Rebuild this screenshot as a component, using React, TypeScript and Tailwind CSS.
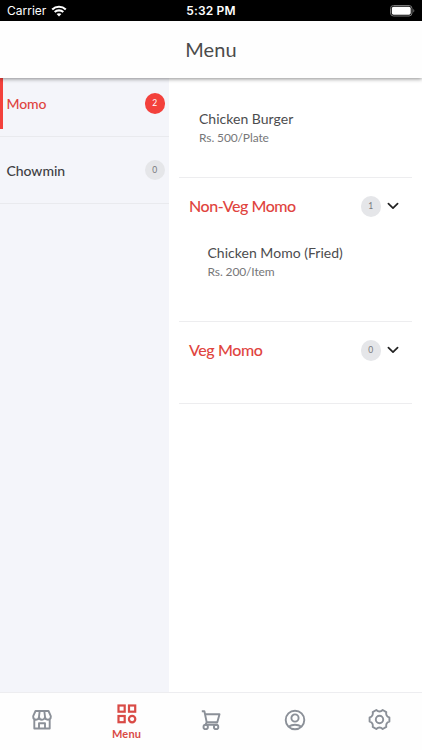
import React from 'react';
import clsx from 'clsx';

const categories = [
  { name: 'Momo', count: 2, active: true, spacing: 'tracking-[-0.1px]' },
  { name: 'Chowmin', count: 0, active: false, spacing: 'tracking-[-0.05px]' },
];

const StatusBar = () => (
  <div className="flex h-[21px] shrink-0 items-center bg-black px-[7px] font-['Inter',sans-serif] text-[12px] text-white">
    <div className="flex flex-1 items-center gap-[5px]">
      <span>Carrier</span>
      <svg width="16" height="12" viewBox="0 0 16 12" fill="none" stroke="white" strokeWidth="2.1">
        <path d="M1.2 4.4C5 .8 11 .8 14.8 4.4" />
        <path d="M3.7 7.1c2.4-2.3 6.2-2.3 8.6 0" />
        <path d="M5.6 9.1c1.3-1.2 3.5-1.2 4.8 0L8 11.6z" fill="white" stroke="none" />
      </svg>
    </div>
    <span className="font-semibold tracking-[0.15px]">5:32 PM</span>
    <div className="flex flex-1 justify-end">
      <svg width="25" height="12" viewBox="0 0 25 12">
        <rect x=".5" y=".5" width="21.5" height="10.5" rx="3" fill="none" stroke="#777" />
        <rect x="1.8" y="1.8" width="18.9" height="7.9" rx="1.7" fill="white" />
        <path d="M23.3 4v3.5c1.4-.5 1.4-3 0-3.5z" fill="#777" />
      </svg>
    </div>
  </div>
);

interface CountBadgeProps {
  count: number;
  active?: boolean;
}

const CountBadge = ({ count, active }: CountBadgeProps) => (
  <span
    className={clsx(
      'flex size-[20.5px] shrink-0 items-center justify-center rounded-full text-[8.5px]',
      active ? 'bg-[#f3413c] text-white' : 'bg-[#e5e6e9] text-[#77787c]'
    )}
  >
    {count}
  </span>
);

interface SectionHeaderProps {
  title: string;
  count: number;
  spacing: string;
}

const SectionHeader = ({ title, count, spacing }: SectionHeaderProps) => (
  <div className="flex h-[57px] items-center pr-[13px] pl-[10px]">
    <h2 className={clsx('flex-1 pb-[2px] text-[16px] font-medium text-[#df4440]', spacing)}>{title}</h2>
    <CountBadge count={count} />
    <svg className="mb-px ml-[6px]" width="12" height="8" viewBox="0 0 12 8" fill="none" stroke="#222" strokeWidth="1.7">
      <path d="M1.4 1.7 6 6.2l4.6-4.5" strokeLinecap="round" strokeLinejoin="round" />
    </svg>
  </div>
);

interface MenuItemProps {
  name: string;
  price: string;
}

const MenuItem = ({ name, price }: MenuItemProps) => (
  <div>
    <div className="text-[14px] leading-[20px] tracking-[0.02px] text-[#4c4c4e]">{name}</div>
    <div className="text-[12px] leading-[18px] tracking-[-0.12px] text-[#777779]">{price}</div>
  </div>
);

const StoreIcon = () => (
  <svg width="22" height="22" viewBox="0 0 22 22" fill="none" stroke="currentColor" strokeWidth="1.9" strokeLinejoin="round">
    <path d="M4.5 2h13l2.3 5.2v.6a2.9 2.9 0 0 1-5.8 0 3 3 0 0 1-6 0 2.9 2.9 0 0 1-5.8 0v-.6zM8 7.5 8.7 2M14 7.5 13.3 2M3.3 10.5v9h15.4v-9" />
    <path d="M8 19.5v-5.3h6v5.3" />
  </svg>
);

const GridIcon = () => (
  <svg width="20" height="20" viewBox="0 0 20 20" fill="none" stroke="currentColor" strokeWidth="2.2">
    <rect x="1.5" y="1.5" width="6.2" height="6.2" />
    <rect x="12" y="1.5" width="6.2" height="6.2" />
    <rect x="1.5" y="12" width="6.2" height="6.2" />
    <circle cx="15.1" cy="15.1" r="3.2" />
  </svg>
);

const CartIcon = () => (
  <svg width="20" height="21" viewBox="0 0 20 21" fill="none" stroke="currentColor" strokeWidth="1.9" strokeLinejoin="round">
    <path d="M.8 1.3h2.6l2.4 11.4M4.3 4.3h14.2l-2.2 7.9H5.7l-1.3 2.6h12.4" />
    <circle cx="4.7" cy="16.9" r="2.2" />
    <circle cx="15.1" cy="16.9" r="2.2" />
  </svg>
);

const ProfileIcon = () => (
  <svg width="22" height="22" viewBox="0 0 22 22" fill="none" stroke="currentColor" strokeWidth="1.9">
    <circle cx="11" cy="11" r="9.3" />
    <circle cx="11" cy="9" r="3.6" />
    <path d="M5 17.6c3-2.4 9-2.4 12 0" />
  </svg>
);

const GearIcon = () => (
  <svg width="23" height="23" viewBox="-11.5 -11.5 23 23" fill="none" stroke="currentColor" strokeWidth="1.9" strokeLinejoin="round">
    <path d="M9.9-2.1V2.1Q7.9 2.3 7.1 4.1T6.8 7.4L3.2 9.5Q1.7 8 0 8T-3.2 9.5L-6.8 7.4Q-6.3 5.9-7.1 4.1T-9.9 2.1V-2.1Q-7.9-2.3-7.1-4.1T-6.8-7.4L-3.2-9.5Q-1.7-8 0-8T3.2-9.5L6.8-7.4Q6.3-5.9 7.1-4.1T9.9-2.1Z" />
    <circle r="3.7" />
  </svg>
);

const App = () => {
  return (
    <div className="flex h-[750px] w-full flex-col overflow-hidden bg-white font-['Lato',sans-serif]">
      <StatusBar />
      <header className="relative flex h-[57px] shrink-0 items-center justify-center bg-[#fefefe] shadow-[0_1px_4px_rgba(0,0,0,0.45)]">
        <h1 className="-mt-[2px] text-[20px] tracking-[0.15px] text-[#4b4b4b]">Menu</h1>
      </header>

      <main className="flex flex-1">
        {/* Categories */}
        <aside className="w-[169px] bg-[#f4f5fa]">
          {categories.map((category, index) => (
            <div
              key={category.name}
              className={clsx('flex flex-col border-b border-[#e9eaee]', index === 0 ? 'h-[59px]' : 'h-[67px]')}
            >
              <div
                className={clsx(
                  'flex items-center border-l-[3px] pr-[4px] pl-[3.5px]',
                  category.active ? 'h-[51px] border-[#f3413c] text-[#df4440]' : 'h-[68px] border-transparent text-[#404044]'
                )}
              >
                <span className={clsx('flex-1 text-[14px] font-medium', category.spacing)}>{category.name}</span>
                <CountBadge count={category.count} active={category.active} />
              </div>
            </div>
          ))}
        </aside>

        {/* Items of the selected category */}
        <section className="flex-1 px-[10px]">
          <div className="h-[100px] border-b border-[#ededef] pt-[31px] pl-[20px]">
            <MenuItem name="Chicken Burger" price="Rs. 500/Plate" />
          </div>
          <div className="h-[144px] border-b border-[#ededef]">
            <SectionHeader title="Non-Veg Momo" count={1} spacing="tracking-[-0.45px]" />
            <div className="pt-[8px] pl-[28.5px]">
              <MenuItem name="Chicken Momo (Fried)" price="Rs. 200/Item" />
            </div>
          </div>
          <div className="h-[82px] border-b border-[#ededef]">
            <SectionHeader title="Veg Momo" count={0} spacing="tracking-[-0.4px]" />
          </div>
        </section>
      </main>

      <nav className="grid h-[58px] shrink-0 grid-cols-5 border-t border-[#ededf0] bg-[#fefefe] text-[#8b9098]">
        <div className="flex justify-center pt-[16px]"><StoreIcon /></div>
        <div className="flex flex-col items-center pt-[11px] text-[#d94b46]">
          <GridIcon />
          <span className="mt-[2px] text-[11px] leading-[15px] font-bold tracking-[0.2px]">Menu</span>
        </div>
        <div className="flex justify-center pt-[17px]"><CartIcon /></div>
        <div className="flex justify-center pt-[16px]"><ProfileIcon /></div>
        <div className="flex justify-center pt-[15px]"><GearIcon /></div>
      </nav>
    </div>
  );
};

export default App;
